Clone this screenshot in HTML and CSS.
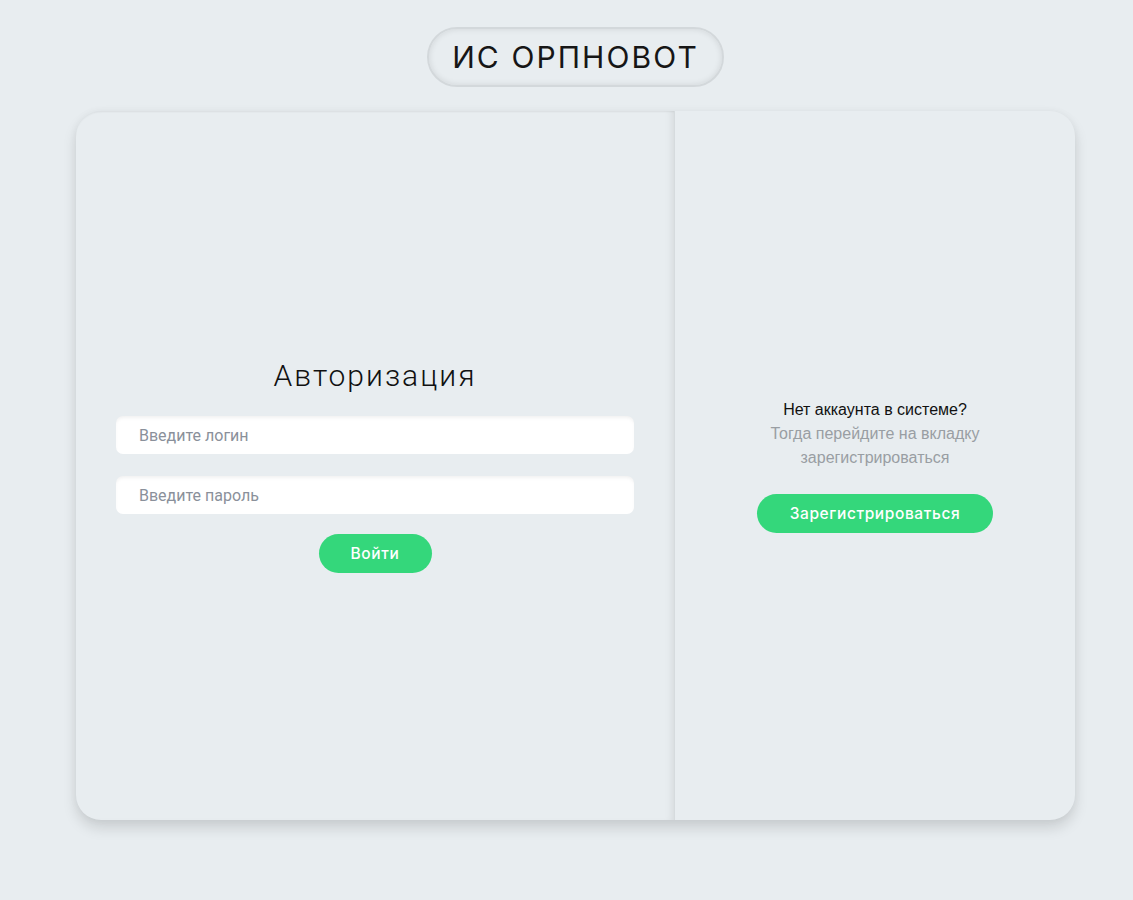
FILE: index.html
```html
<!DOCTYPE html>
<html lang="ru">
<head>
<meta charset="utf-8">
<title>ИС ОРПНОВОТ</title>
<link rel="stylesheet" href="styles.css">
</head>
<body>
<div class="page">
  <header class="brand">ИС ОРПНОВОТ</header>
  <main class="card">
    <section class="login">
      <h1 class="login-title">Авторизация</h1>
      <form class="login-form">
        <input class="field" type="text" placeholder="Введите логин">
        <input class="field" type="password" placeholder="Введите пароль">
        <button class="btn btn-login" type="button">Войти</button>
      </form>
    </section>
    <aside class="signup">
      <p class="signup-q">Нет аккаунта в системе?</p>
      <p class="signup-hint">Тогда перейдите на вкладку<br>зарегистрироваться</p>
      <button class="btn btn-signup" type="button">Зарегистрироваться</button>
    </aside>
  </main>
</div>
</body>
</html>
```

FILE: styles.css
```css
* { box-sizing: border-box; }
html, body { margin: 0; padding: 0; }
body {
  background: #e8edf0;
  font-family: "Roboto", "Liberation Sans", sans-serif;
  color: #111;
}
.page {
  width: 1133px;
  height: 900px;
  display: flex;
  flex-direction: column;
  align-items: center;
  padding: 27px 0 0 18px;
}
.brand {
  height: 60px;
  padding: 0 23px;
  display: flex;
  align-items: center;
  border: 2px solid #d3d8db;
  border-radius: 30px;
  box-shadow: inset 0 0 6px rgba(0,0,0,0.10);
  font-family: "Inter", sans-serif;
  font-size: 30px;
  letter-spacing: 2.1px;
  color: #161616;
}
.card {
  margin-top: 24px;
  width: 999px;
  height: 709px;
  display: flex;
  border-radius: 25px;
  background: #e8edf0;
  box-shadow: 0 8px 14px rgba(0,0,0,0.13), 0 0 8px rgba(0,0,0,0.04);
}
.login {
  width: 599px;
  display: flex;
  flex-direction: column;
  align-items: center;
  justify-content: center;
  border-radius: 25px 0 0 25px;
  border-right: 1px solid #d6dbde;
  box-shadow: inset 0 2px 2px -1px rgba(0,0,0,0.06), inset -7px 0 8px -6px rgba(0,0,0,0.10);
}
.login-title {
  margin: 0 0 22px;
  font-family: "Roboto", sans-serif;
  font-weight: 300;
  font-size: 30px;
  letter-spacing: 2px;
  line-height: 36px;
  color: #111;
}
.login-form {
  display: flex;
  flex-direction: column;
  align-items: center;
  gap: 22px;
}
.field {
  width: 518px;
  height: 38px;
  border: none;
  border-radius: 7px;
  background: #fff;
  padding: 0 23px;
  font-family: "Roboto", sans-serif;
  font-size: 16px;
  box-shadow: inset 0 3px 4px -2px rgba(0,0,0,0.08);
  outline: none;
}
.field::placeholder { color: #8a909a; }
.btn {
  height: 39px;
  border: none;
  border-radius: 20px;
  background: #34d77b;
  color: #fff;
  font-family: "Inter", sans-serif;
  font-size: 15.5px;
  font-weight: 500;
  letter-spacing: 0.6px;
  cursor: pointer;
}
.btn-login { width: 113px; margin-top: -2px; }
.signup {
  flex: 1;
  display: flex;
  flex-direction: column;
  align-items: center;
  justify-content: center;
  text-align: center;
  font-family: "Liberation Sans", "Helvetica", sans-serif;
}
.signup-q {
  margin: 0;
  font-size: 16px;
  line-height: 24px;
  color: #111;
}
.signup-hint {
  margin: 0 0 24px;
  font-size: 16px;
  line-height: 24px;
  color: #999ea3;
}
.btn-signup { width: 236px; }
```
